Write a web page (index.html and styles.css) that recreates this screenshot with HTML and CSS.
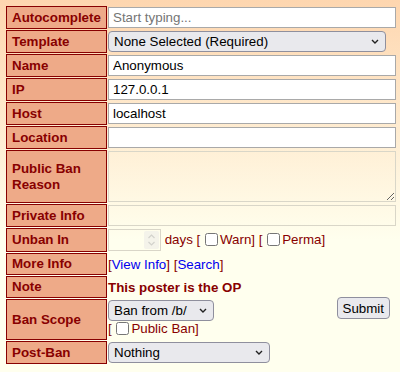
FILE: index.html
```html
<!DOCTYPE html>
<html lang="en">
<head>
    <meta charset="UTF-8">
    <meta name="viewport" content="width=device-width, initial-scale=1.0">
    <title>Ban</title>
    <link rel="stylesheet" href="styles.css">
</head>
<body>
    <form class="ban-form">
        <table class="ban-table">
            <tr>
                <td class="label">Autocomplete</td>
                <td><input type="text" class="field" placeholder="Start typing..."></td>
            </tr>
            <tr>
                <td class="label">Template</td>
                <td>
                    <span class="select-wrap">
                        <select class="pick pick-wide">
                            <option>None Selected (Required)</option>
                        </select>
                        <svg class="chevron" width="8" height="5" viewBox="0 0 8 5"><path d="M1 1l3 3 3-3" fill="none" stroke="#222" stroke-width="1.4"/></svg>
                    </span>
                </td>
            </tr>
            <tr>
                <td class="label">Name</td>
                <td><input type="text" class="field" value="Anonymous"></td>
            </tr>
            <tr>
                <td class="label">IP</td>
                <td><input type="text" class="field" value="127.0.0.1"></td>
            </tr>
            <tr>
                <td class="label">Host</td>
                <td><input type="text" class="field" value="localhost"></td>
            </tr>
            <tr>
                <td class="label">Location</td>
                <td><input type="text" class="field"></td>
            </tr>
            <tr>
                <td class="label">Public Ban Reason</td>
                <td><textarea class="field soft reason"></textarea></td>
            </tr>
            <tr>
                <td class="label">Private Info</td>
                <td><input type="text" class="field soft"></td>
            </tr>
            <tr>
                <td class="label">Unban In</td>
                <td class="inline">
                    <span class="spin-wrap">
                        <input type="number" class="soft days">
                        <span class="spinner">
                            <svg width="9" height="16" viewBox="0 0 9 16"><path d="M1.5 6l3-3 3 3M1.5 10l3 3 3-3" fill="none" stroke="#d2d2cc" stroke-width="1.2"/></svg>
                        </span>
                    </span>
                    days [ <input type="checkbox">Warn] [ <input type="checkbox">Perma]
                </td>
            </tr>
            <tr>
                <td class="label">More Info</td>
                <td class="inline">[<a href="#">View Info</a>] [<a href="#">Search</a>]</td>
            </tr>
            <tr>
                <td class="label">Note</td>
                <td class="inline note">This poster is the OP</td>
            </tr>
            <tr>
                <td class="label">Ban Scope</td>
                <td class="inline scope">
                    <button type="button" class="submit">Submit</button>
                    <span class="select-wrap">
                        <select class="pick pick-short">
                            <option>Ban from /b/</option>
                        </select>
                        <svg class="chevron" width="8" height="5" viewBox="0 0 8 5"><path d="M1 1l3 3 3-3" fill="none" stroke="#222" stroke-width="1.4"/></svg>
                    </span><br>
                    [ <input type="checkbox">Public Ban]
                </td>
            </tr>
            <tr>
                <td class="label">Post-Ban</td>
                <td>
                    <span class="select-wrap">
                        <select class="pick pick-mid">
                            <option>Nothing</option>
                        </select>
                        <svg class="chevron" width="8" height="5" viewBox="0 0 8 5"><path d="M1 1l3 3 3-3" fill="none" stroke="#222" stroke-width="1.4"/></svg>
                    </span>
                </td>
            </tr>
        </table>
    </form>
</body>
</html>
```

FILE: styles.css
```css
body {
    margin: 0;
    padding: 5px;
    font-family: "Liberation Sans", Arial, sans-serif;
    font-size: 13.33px;
    color: #800;
    background: #ffe linear-gradient(#fed6af, #ffe 240px) no-repeat;
    min-height: 372px;
    box-sizing: border-box;
}
.ban-table {
    border-spacing: 1px;
    width: 393px;
}
.ban-table td {
    padding: 1px 0;
}
.ban-table td.label {
    width: 89px;
    height: 20px;
    padding: 0 5px;
    background: #ea8;
    border: 1px solid #800;
    font-weight: bold;
    line-height: 16px;
    color: #800;
}
.field {
    display: block;
    width: 288px;
    height: 21px;
    box-sizing: border-box;
    font-family: "Liberation Sans", Arial, sans-serif;
    font-size: 13.33px;
    padding: 2px 4px;
    border: 1px solid #a9a9a9;
    background: #fff;
    color: #000;
}
.field::placeholder {
    color: #757575;
}
.soft {
    background: transparent;
    border: 1px solid #d9d6c8;
}
.reason {
    height: 51px;
    resize: vertical;
}
.spin-wrap {
    position: relative;
    display: inline-block;
    vertical-align: middle;
}
.days {
    display: block;
    width: 53px;
    height: 22px;
    box-sizing: border-box;
    padding: 2px 4px;
    -moz-appearance: textfield;
}
.days::-webkit-inner-spin-button,
.days::-webkit-outer-spin-button {
    -webkit-appearance: none;
    margin: 0;
}
.spinner {
    position: absolute;
    top: 2px;
    right: 2px;
    width: 15px;
    height: 18px;
    display: flex;
    align-items: center;
    justify-content: center;
    background: #f4f3ea;
    border-radius: 2px;
}
.inline {
    color: #800;
}
.inline input[type="checkbox"] {
    vertical-align: -2px;
    margin: 0 2px 0 1px;
}
.inline a {
    color: #00e;
    text-decoration: none;
}
.note {
    font-weight: bold;
}
.ban-table td.scope {
    padding-bottom: 4px;
}
.select-wrap {
    position: relative;
    display: inline-block;
    vertical-align: middle;
}
.pick {
    display: block;
    -webkit-appearance: none;
    appearance: none;
    height: 21px;
    box-sizing: border-box;
    padding: 0 20px 0 5px;
    font-family: "Liberation Sans", Arial, sans-serif;
    font-size: 13.33px;
    color: #000;
    background: #e9e9ed;
    border: 1px solid #8f8f9d;
    border-radius: 4px;
}
.chevron {
    position: absolute;
    right: 7px;
    top: 8px;
    pointer-events: none;
}
.pick-wide {
    width: 278px;
}
.pick-short {
    width: 106px;
}
.pick-mid {
    width: 162px;
}
.submit {
    float: right;
    margin: -3px 7px 0 0;
    height: 22px;
    padding: 0 5px;
    font-family: "Liberation Sans", Arial, sans-serif;
    font-size: 13.33px;
    color: #000;
    background: #e9e9ed;
    border: 1px solid #8f8f9d;
    border-radius: 4px;
}
```
